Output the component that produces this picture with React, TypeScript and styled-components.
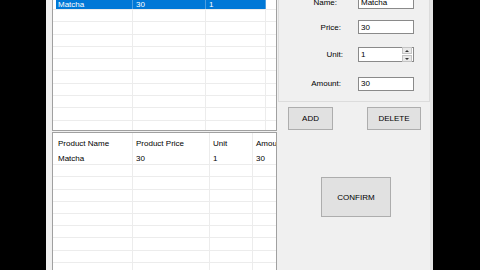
import React from "react";
import styled, { createGlobalStyle } from "styled-components";

const GlobalStyle = createGlobalStyle`
  html, body {
    margin: 0;
    padding: 0;
    background: #000;
  }
  body {
    width: 480px;
    height: 270px;
    overflow: hidden;
    font-family: "Liberation Sans", Arial, sans-serif;
    font-size: 8px;
    color: #000;
  }
`;

// Black letterbox around the captured window.
const Screen = styled.div`
  display: flex;
  width: 480px;
  height: 270px;
  background: #000;
`;

const Form = styled.div`
  margin-left: 46px;
  width: 387px;
  height: 270px;
  box-sizing: border-box;
  padding-left: 6px;
  background: #f0f0f0;
  border-right: 3px solid #e4e4e4;
  display: flex;
  overflow: hidden;
`;

const LeftColumn = styled.div`
  width: 225px;
  display: flex;
  flex-direction: column;
  gap: 1px;
`;

const GridBox = styled.div<{ $height?: number; $open?: boolean }>`
  box-sizing: border-box;
  width: 225px;
  height: ${({ $height }) => ($height ? `${$height}px` : "auto")};
  flex: ${({ $height }) => ($height ? "none" : "1")};
  background: #fff;
  border: 1px solid #a0a0a0;
  border-top: ${({ $open }) => ($open ? "none" : "1px solid #a0a0a0")};
  border-bottom: ${({ $open }) => ($open ? "1px solid #a0a0a0" : "none")};
  overflow: hidden;
`;

const Row = styled.div<{ $h: number }>`
  display: flex;
  height: ${({ $h }) => $h}px;
  box-sizing: border-box;
  border-bottom: 1px solid #ececec;
`;

const Gutter = styled.div`
  width: 3px;
  flex: none;
`;

const Cell = styled.div<{ $w: number; $selected?: boolean; $pad?: number }>`
  width: ${({ $w }) => $w}px;
  flex: none;
  box-sizing: border-box;
  padding-left: ${({ $pad }) => $pad ?? 3}px;
  border-right: 1px solid ${({ $selected }) => ($selected ? "#4d9ee0" : "#ececec")};
  background: ${({ $selected }) => ($selected ? "#0078d7" : "transparent")};
  color: ${({ $selected }) => ($selected ? "#fff" : "#000")};
  display: flex;
  align-items: center;
  white-space: nowrap;
  overflow: hidden;
`;

const RightColumn = styled.div`
  width: 152px;
  margin-left: 1px;
  display: flex;
  flex-direction: column;
`;

const Panel = styled.div`
  box-sizing: border-box;
  height: 102px;
  border: 1px solid #dcdcdc;
  border-top: none;
  overflow: hidden;
`;

const FieldGrid = styled.div`
  display: grid;
  grid-template-columns: 64px 56px;
  grid-template-rows: 24px 26px 29px 29px;
  column-gap: 15px;
  margin-top: -10px;
`;

const Label = styled.div<{ $nudge: number }>`
  justify-self: end;
  align-self: center;
  padding-right: ${({ $nudge }) => $nudge}px;
`;

const TextBox = styled.div`
  align-self: center;
  box-sizing: border-box;
  height: 14px;
  background: #fff;
  border: 1px solid #8a8a8a;
  padding-left: 2px;
  display: flex;
  align-items: center;
`;

const SpinBox = styled(TextBox)`
  height: 15px;
  justify-content: space-between;
  padding-right: 1px;
`;

const SpinButtons = styled.div`
  width: 10px;
  display: flex;
  flex-direction: column;
  gap: 1px;
`;

const SpinButton = styled.div<{ $up?: boolean }>`
  height: 5px;
  background: #e9e9e9;
  border: 1px solid #c4c4c4;
  display: flex;
  align-items: center;
  justify-content: center;
  &::after {
    content: "";
    border-left: 2px solid transparent;
    border-right: 2px solid transparent;
    ${({ $up }) =>
      $up ? "border-bottom: 2px solid #333;" : "border-top: 2px solid #333;"}
  }
`;

const ButtonRow = styled.div`
  display: flex;
  gap: 34px;
  margin-top: 5px;
  padding-left: 10px;
`;

const Button = styled.div<{ $w: number; $h: number }>`
  box-sizing: border-box;
  width: ${({ $w }) => $w}px;
  height: ${({ $h }) => $h}px;
  background: #e1e1e1;
  border: 1px solid #adadad;
  display: flex;
  align-items: center;
  justify-content: center;
`;

const ConfirmRow = styled.div`
  display: flex;
  margin-top: 47px;
  padding-left: 43px;
`;

const topCols = [77, 73, 60];
const bottomCols = [77, 77, 43, 60];

function TopGrid() {
  const empty = Array.from({ length: 10 });
  return (
    <GridBox $height={131} $open>
      <Row $h={10}>
        <Gutter />
        {["Matcha", "30", "1"].map((t, i) => (
          <Cell key={i} $w={topCols[i]} $selected $pad={i === 0 ? 2 : 3}>
            {t}
          </Cell>
        ))}
      </Row>
      {empty.map((_, r) => (
        <Row key={r} $h={12.3}>
          <Gutter />
          {topCols.map((w, i) => (
            <Cell key={i} $w={w} />
          ))}
        </Row>
      ))}
    </GridBox>
  );
}

function BottomGrid() {
  const header = ["Product Name", "Product Price", "Unit", "Amount"];
  const data = ["Matcha", "30", "1", "30"];
  const empty = Array.from({ length: 10 });
  return (
    <GridBox>
      <Row $h={20} style={{ borderBottom: "none" }}>
        <Gutter />
        {header.map((t, i) => (
          <Cell key={i} $w={bottomCols[i]} $pad={i === 0 ? 2 : 3}>
            {t}
          </Cell>
        ))}
      </Row>
      <Row $h={12.2}>
        <Gutter />
        {data.map((t, i) => (
          <Cell key={i} $w={bottomCols[i]} $pad={i === 0 ? 2 : 3}>
            {t}
          </Cell>
        ))}
      </Row>
      {empty.map((_, r) => (
        <Row key={r} $h={12.2}>
          <Gutter />
          {bottomCols.map((w, i) => (
            <Cell key={i} $w={w} />
          ))}
        </Row>
      ))}
    </GridBox>
  );
}

export default function App() {
  return (
    <>
      <GlobalStyle />
      <Screen>
        <Form>
          <LeftColumn>
            <TopGrid />
            <BottomGrid />
          </LeftColumn>
          <RightColumn>
            <Panel>
              <FieldGrid>
                <Label $nudge={6}>Name:</Label>
                <TextBox>Matcha</TextBox>
                <Label $nudge={2}>Price:</Label>
                <TextBox>30</TextBox>
                <Label $nudge={0}>Unit:</Label>
                <SpinBox>
                  <span>1</span>
                  <SpinButtons>
                    <SpinButton $up />
                    <SpinButton />
                  </SpinButtons>
                </SpinBox>
                <Label $nudge={2}>Amount:</Label>
                <TextBox>30</TextBox>
              </FieldGrid>
            </Panel>
            <ButtonRow>
              <Button $w={45} $h={23}>ADD</Button>
              <Button $w={54} $h={23}>DELETE</Button>
            </ButtonRow>
            <ConfirmRow>
              <Button $w={70} $h={40}>CONFIRM</Button>
            </ConfirmRow>
          </RightColumn>
        </Form>
      </Screen>
    </>
  );
}
